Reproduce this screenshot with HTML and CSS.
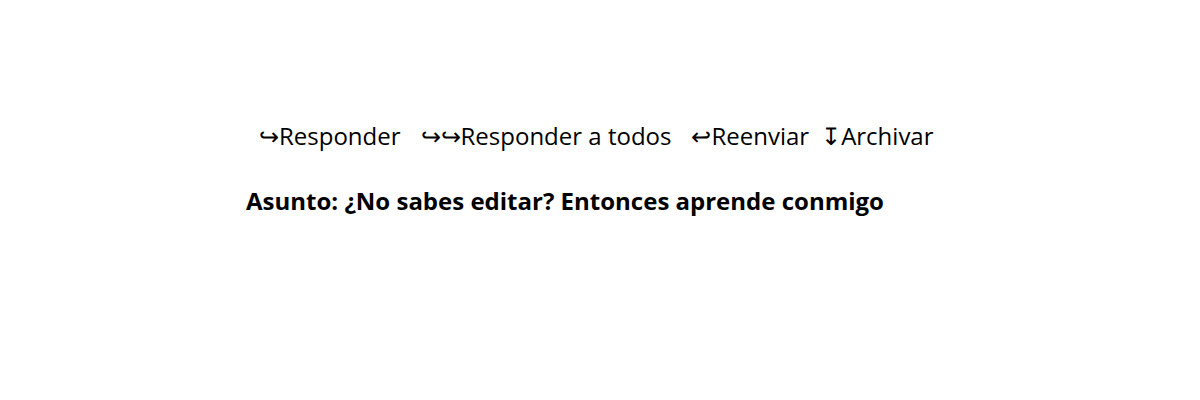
FILE: index.html
```html
<!DOCTYPE html>
<html lang="es">
<head>
<meta charset="utf-8">
<link rel="stylesheet" href="styles.css">
</head>
<body>
<div class="mail">
  <div class="toolbar">
    <span class="btn">↪Responder</span>
    <span class="btn">↪↪Responder a todos</span>
    <span class="btn">↩Reenviar</span>
    <span class="btn btn-archive">↧Archivar</span>
  </div>
  <div class="subject">Asunto: ¿No sabes editar? Entonces aprende conmigo</div>
</div>
</body>
</html>
```
FILE: styles.css
```css
html, body {
  margin: 0;
  background: #fff;
}
body {
  font-family: "Open Sans", "Noto Sans", sans-serif;
  color: #000;
}
.mail {
  width: 708px;
  margin: 0 auto;
  padding-top: 119px;
}
.toolbar {
  display: flex;
  justify-content: flex-start;
  gap: 20px;
  padding-left: 13px;
  font-size: 24px;
  line-height: 34px;
}
.btn-archive {
  margin-left: -8px;
}
.subject {
  margin-top: 31px;
  font-size: 24px;
  font-weight: 700;
  line-height: 34px;
}
```
